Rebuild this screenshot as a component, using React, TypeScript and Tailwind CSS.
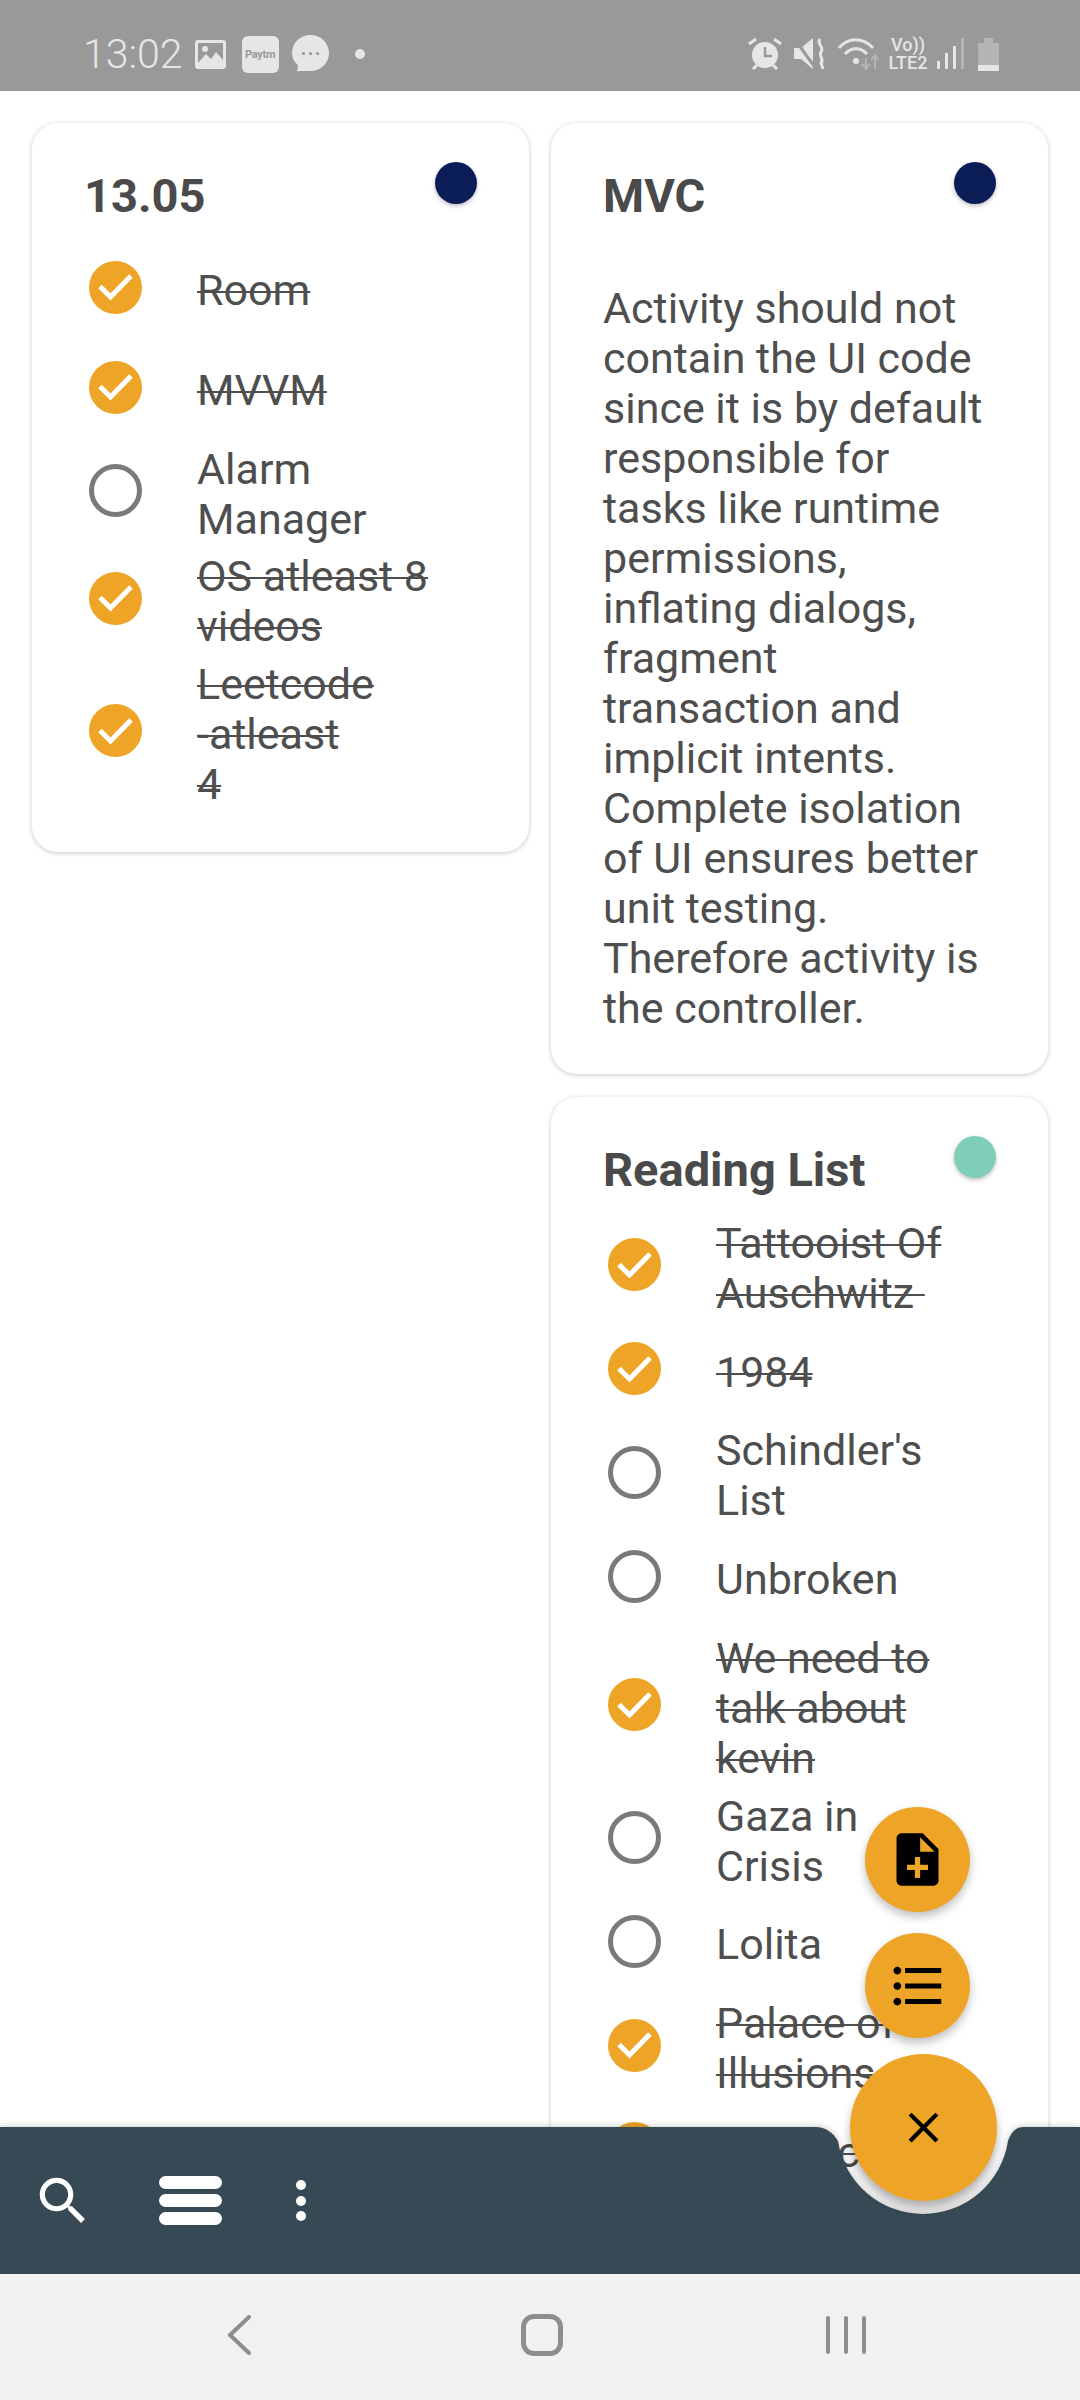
import { Fragment } from "react"

const FONT = "font-['Roboto',sans-serif]"

type Item = { text: string; done: boolean }

const DAILY: Item[] = [
  { text: "Room", done: true },
  { text: "MVVM", done: true },
  { text: "Alarm Manager", done: false },
  { text: "OS atleast 8 videos", done: true },
  { text: "Leetcode\n-atleast\n4", done: true },
]

const READING: Item[] = [
  { text: "Tattooist Of Auschwitz\u00a0", done: true },
  { text: "1984", done: true },
  { text: "Schindler's List", done: false },
  { text: "Unbroken", done: false },
  { text: "We need to talk about kevin", done: true },
  { text: "Gaza in Crisis", done: false },
  { text: "Lolita", done: false },
  { text: "Palace of Illusions", done: true },
  { text: "The Alchemy", done: true },
]

const MVC_LINES = [
  "Activity should not",
  "contain the UI code",
  "since it is by default",
  "responsible for",
  "tasks like runtime",
  "permissions,",
  "inflating dialogs,",
  "fragment",
  "transaction and",
  "implicit intents.",
  "Complete isolation",
  "of UI ensures better",
  "unit testing.",
  "Therefore activity is",
  "the controller.",
]

function Check({ done }: { done: boolean }) {
  if (!done) {
    return <div className="h-[53px] w-[53px] shrink-0 rounded-full border-[5px] border-[#7a7a7a]" />
  }
  return (
    <div className="flex h-[53px] w-[53px] shrink-0 items-center justify-center rounded-full bg-[#eea426]">
      <svg width="37" height="30" viewBox="0 0 37 30" fill="none">
        <path d="M3 14.5 L13.5 25 L34 4" stroke="#fff" strokeWidth="5" />
      </svg>
    </div>
  )
}

function Row({ item }: { item: Item }) {
  return (
    <div className="flex min-h-[100px] items-center py-[3.8px]">
      <div className="ml-[5px]">
        <Check done={item.done} />
      </div>
      <p
        className={`ml-[55px] w-[255px] translate-y-[3px] whitespace-pre-line text-[43px] leading-[50px] text-[#4e4e4e] ${
          item.done ? "line-through decoration-2" : ""
        }`}
      >
        {item.text}
      </p>
    </div>
  )
}

function Card({
  title,
  dot,
  children,
}: {
  title: string
  dot: string
  children: React.ReactNode
}) {
  return (
    <div className="relative rounded-[26px] bg-white pb-[41px] pl-[52px] pr-[40px] pt-[45px] shadow-[0_1px_5px_rgba(0,0,0,0.22)]">
      <h2 className="h-[69px] text-[47px] font-bold leading-[56px] text-[#4a4a4a]">{title}</h2>
      <div
        className="absolute right-[52px] top-[39px] h-[42px] w-[42px] rounded-full shadow-[0_2px_4px_rgba(0,0,0,0.25)]"
        style={{ backgroundColor: dot }}
      />
      {children}
    </div>
  )
}

function StatusBar() {
  return (
    <div className="flex h-[91px] shrink-0 items-center bg-[#999999] pl-[83px] pr-[81px] pt-[17px] text-[#e6e6e6]">
      <span className="text-[41px] font-light leading-none">13:02</span>
      <svg className="ml-[12px]" width="31" height="29" viewBox="0 0 31 29" fill="none">
        <rect x="1.5" y="1.5" width="28" height="26" rx="1.5" stroke="#e6e6e6" strokeWidth="3" />
        <path d="M3 23 L11 14 L16 19 L21 12 L28 20 V27 H3 Z" fill="#e6e6e6" />
        <circle cx="10" cy="9" r="3" fill="#e6e6e6" />
      </svg>
      <div className="ml-[16px] flex h-[37px] w-[37px] items-center justify-center rounded-[6px] bg-[#e6e6e6]">
        <span className="text-[11px] font-bold leading-none tracking-[-0.3px] text-[#999999]">Paytm</span>
      </div>
      <svg className="ml-[13px]" width="37" height="38" viewBox="0 0 37 38">
        <path d="M18.5 0 C29 0 37 8 37 18 C37 28 29 36 18.5 36 H6 L5 38 L6 30 C2 27 0 23 0 18 C0 8 8 0 18.5 0Z" fill="#e6e6e6" />
        <circle cx="11.5" cy="18.5" r="1.6" fill="#999" />
        <circle cx="18.5" cy="18.5" r="1.6" fill="#999" />
        <circle cx="25.5" cy="18.5" r="1.6" fill="#999" />
      </svg>
      <div className="ml-[26px] h-[10px] w-[10px] rounded-full bg-[#e6e6e6]" />

      <div className="ml-auto flex items-center">
        <svg width="34" height="32" viewBox="0 0 34 32" fill="none">
          <circle cx="17" cy="17" r="13" fill="#e6e6e6" />
          <path d="M17 9 V18 H24" stroke="#999" strokeWidth="2.5" />
          <path d="M1 6 L8 1 M33 6 L26 1 M5 31 L9 27 M29 31 L25 27" stroke="#e6e6e6" strokeWidth="3" />
        </svg>
        <svg className="ml-[12px]" width="32" height="32" viewBox="0 0 32 32" fill="none">
          <path d="M0 10 H7 L19 0 V31 L7 21 H0 Z" fill="#e6e6e6" />
          <path d="M2 3 L20 28" stroke="#999" strokeWidth="3" />
          <path d="M26 1 C22 6 31 9 27 14 C24 18 31 22 27 25 L29 31" stroke="#e6e6e6" strokeWidth="3" />
        </svg>
        <svg className="ml-[12px]" width="41" height="32" viewBox="0 0 41 32" fill="none">
          <path d="M1 10 C10 -1 25 -1 35 10" stroke="#e6e6e6" strokeWidth="3" />
          <path d="M7 16 C13 9 23 9 29 16" stroke="#e6e6e6" strokeWidth="3" />
          <circle cx="18" cy="23" r="3" fill="#e6e6e6" />
          <path d="M28 20 V30 M24 26 L28 31 L32 26" stroke="#b5b5b5" strokeWidth="2" />
          <path d="M37 31 V19 M33 22 L37 17 L41 22" stroke="#b5b5b5" strokeWidth="2" />
        </svg>
        <div className="ml-[8px] flex w-[42px] flex-col items-center text-[18px] font-medium leading-[18px]">
          <span>Vo))</span>
          <span>LTE2</span>
        </div>
        <svg className="ml-[8px]" width="28" height="32" viewBox="0 0 28 32">
          <rect x="0" y="23" width="3" height="8" fill="#e6e6e6" />
          <rect x="8" y="15" width="3" height="16" fill="#e6e6e6" />
          <rect x="16" y="8" width="3" height="23" fill="#e6e6e6" />
          <rect x="24" y="0" width="3" height="31" fill="#b5b5b5" />
        </svg>
        <svg className="ml-[13px]" width="21" height="33" viewBox="0 0 21 33">
          <path d="M6 0 H15 V5 H21 V33 H0 V5 H6 Z" fill="#b5b5b5" />
          <rect x="0" y="27" width="21" height="6" fill="#e6e6e6" />
        </svg>
      </div>
    </div>
  )
}

function BottomBar() {
  return (
    <div className="absolute bottom-[126px] left-0 h-[147px] w-full">
      <svg
        className="absolute inset-0 drop-shadow-[0_-1px_3px_rgba(0,0,0,0.2)]"
        width="1080"
        height="147"
        viewBox="0 0 1080 147"
      >
        <path
          d="M0 0 H815 C826 0 833 6 838 14 A86 86 0 0 0 1008 14 C1011 6 1015 0 1024 0 H1080 V147 H0 Z"
          fill="#374955"
        />
      </svg>
      <div className="relative flex h-full items-center pl-[32px] text-white">
        <svg width="62" height="62" viewBox="0 0 24 24" fill="#fff">
          <path d="M15.5 14h-.79l-.28-.27C15.41 12.59 16 11.11 16 9.5 16 5.91 13.09 3 9.5 3S3 5.91 3 9.5 5.91 16 9.5 16c1.61 0 3.09-.59 4.23-1.57l.27.28v.79l5 4.99L20.49 19l-4.99-5zm-6 0C7.01 14 5 11.99 5 9.5S7.01 5 9.5 5 14 7.01 14 9.5 11.99 14 9.5 14z" />
        </svg>
        <div className="ml-[65px] flex w-[63px] flex-col gap-[5px]">
          <div className="h-[13px] rounded-full bg-white" />
          <div className="h-[13px] rounded-full bg-white" />
          <div className="h-[13px] rounded-full bg-white" />
        </div>
        <div className="ml-[74px] flex flex-col gap-[5.5px]">
          <div className="h-[10px] w-[10px] rounded-full bg-white" />
          <div className="h-[10px] w-[10px] rounded-full bg-white" />
          <div className="h-[10px] w-[10px] rounded-full bg-white" />
        </div>
      </div>
    </div>
  )
}

function Fabs() {
  return (
    <>
      <button className="absolute left-[865px] top-[1807px] flex h-[105px] w-[105px] items-center justify-center rounded-full bg-[#eea426] shadow-[0_5px_10px_rgba(0,0,0,0.25)]">
        <svg width="63" height="63" viewBox="0 0 24 24" fill="#000">
          <path d="M14 2H6c-1.1 0-1.99.9-1.99 2L4 20c0 1.1.89 2 1.99 2H18c1.1 0 2-.9 2-2V8l-6-6zm2 14h-3v3h-2v-3H8v-2h3v-3h2v3h3v2zm-3-7V3.5L18.5 9H13z" />
        </svg>
      </button>
      <button className="absolute left-[865px] top-[1933px] flex h-[105px] w-[105px] items-center justify-center rounded-full bg-[#eea426] shadow-[0_5px_10px_rgba(0,0,0,0.25)]">
        <svg width="62" height="62" viewBox="0 0 24 24" fill="#000">
          <path d="M4 10.5c-.83 0-1.5.67-1.5 1.5s.67 1.5 1.5 1.5 1.5-.67 1.5-1.5-.67-1.5-1.5-1.5zm0-6c-.83 0-1.5.67-1.5 1.5S3.17 7.5 4 7.5 5.5 6.83 5.5 6 4.83 4.5 4 4.5zm0 12c-.83 0-1.5.68-1.5 1.5s.68 1.5 1.5 1.5 1.5-.68 1.5-1.5-.67-1.5-1.5-1.5zM7 19h14v-2H7v2zm0-6h14v-2H7v2zm0-8v2h14V5H7z" />
        </svg>
      </button>
      <button className="absolute left-[850px] top-[2054px] flex h-[147px] w-[147px] items-center justify-center rounded-full bg-[#eea426] shadow-[0_8px_10px_rgba(0,0,0,0.3)]">
        <svg width="51" height="51" viewBox="0 0 24 24" fill="#000">
          <path d="M19 6.41L17.59 5 12 10.59 6.41 5 5 6.41 10.59 12 5 17.59 6.41 19 12 13.41 17.59 19 19 17.59 13.41 12z" />
        </svg>
      </button>
    </>
  )
}

function NavBar() {
  return (
    <div className="relative z-10 flex h-[126px] shrink-0 items-center bg-[#f1f1f1] pb-[4px]">
      <svg className="ml-[227px]" width="24" height="40" viewBox="0 0 24 40" fill="none">
        <path d="M22 2 L3 20 L22 38" stroke="#8e8e8e" strokeWidth="4" strokeLinecap="round" strokeLinejoin="round" />
      </svg>
      <div className="ml-[270px] h-[42px] w-[42px] rounded-[13px] border-[5px] border-[#8e8e8e]" />
      <div className="ml-[263px] flex gap-[14px]">
        <div className="h-[38px] w-[4px] rounded-full bg-[#8e8e8e]" />
        <div className="h-[38px] w-[4px] rounded-full bg-[#8e8e8e]" />
        <div className="h-[38px] w-[4px] rounded-full bg-[#8e8e8e]" />
      </div>
    </div>
  )
}

export default function App() {
  return (
    <div className={`relative flex h-[2400px] w-[1080px] flex-col overflow-hidden bg-white ${FONT}`}>
      <StatusBar />
      <main className="flex min-h-0 flex-1 items-start gap-[22px] overflow-hidden pl-[32px] pt-[32px]">
        <div className="w-[497px]">
          <Card title="13.05" dot="#0a1d56">
            <div className="pb-[1px]">
              {DAILY.map((item) => (
                <Row key={item.text} item={item} />
              ))}
            </div>
          </Card>
        </div>
        <div className="flex w-[497px] flex-col gap-[23px]">
          <Card title="MVC" dot="#0a1d56">
            <p className="mt-[46px] text-[43px] leading-[50px] text-[#4e4e4e]">
              {MVC_LINES.map((line) => (
                <Fragment key={line}>
                  {line}
                  <br />
                </Fragment>
              ))}
            </p>
          </Card>
          <Card title="Reading List" dot="#7fcfb8">
            {READING.map((item) => (
              <Row key={item.text} item={item} />
            ))}
          </Card>
        </div>
      </main>
      <BottomBar />
      <Fabs />
      <NavBar />
    </div>
  )
}
